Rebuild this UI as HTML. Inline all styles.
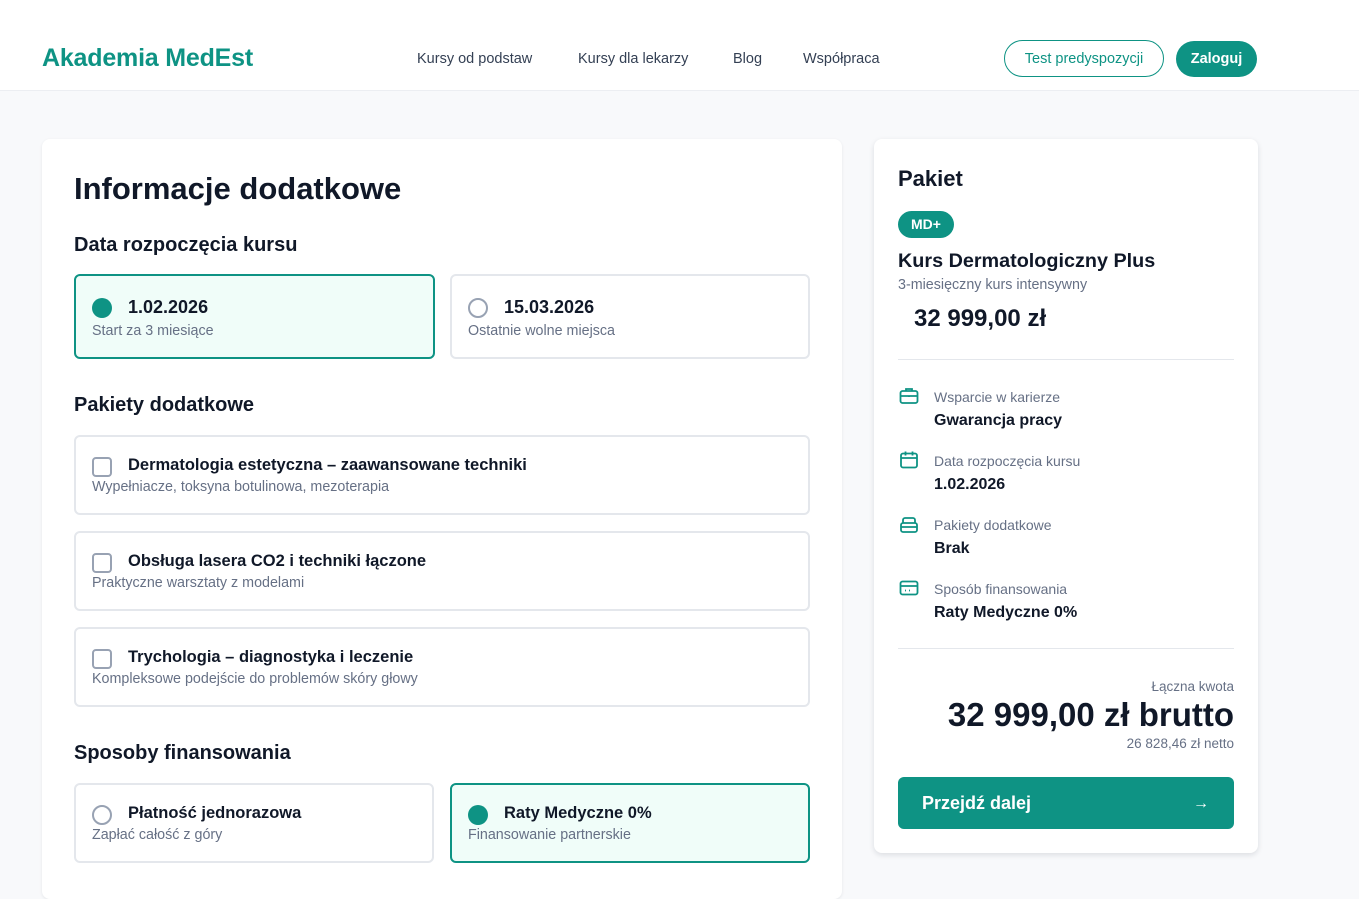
<!DOCTYPE html>
<html><head><meta charset="utf-8"><style>
*{margin:0;padding:0;box-sizing:border-box}
body{width:1359px;height:882px;overflow:hidden;background:#f8f9fb;font-family:"Liberation Sans",sans-serif;color:#101828;position:relative}
.a{position:absolute;white-space:nowrap}
.hdr{position:absolute;left:0;top:0;width:1359px;height:91px;background:#fff;border-bottom:1px solid #eceef2}
.nav{font-size:14.5px;color:#344054}
.card{position:absolute;background:#fff;border-radius:8px;box-shadow:0 1px 3px rgba(16,24,40,.08)}
.opt{position:absolute;border:2px solid #e4e7ec;border-radius:6px;background:#fff}
.opt.sel{border-color:#0e9384;background:#f0fdf9}
.h2{font-size:20px;font-weight:600;color:#101828}
.t{font-size:16.5px;font-weight:700;color:#101828}
.s{font-size:14.3px;color:#667085}
.radio{position:absolute;width:20px;height:20px;border-radius:50%;border:2px solid #98a2b3;background:#fff}
.radio.on{border:none;background:#0e9384}
.cb{position:absolute;width:20px;height:20px;border-radius:4px;border:2px solid #98a2b3;background:#fff}
.lbl{font-size:14px;color:#667085}
.val{font-size:16px;font-weight:700;color:#101828}
</style></head><body>
<div class="hdr"></div>
<div class="a" style="left:42px;top:44px;font-size:25px;font-weight:700;color:#0e9384;letter-spacing:-0.2px">Akademia MedEst</div>
<div class="a nav" style="left:417px;top:51px">Kursy od podstaw</div>
<div class="a nav" style="left:578px;top:51px">Kursy dla lekarzy</div>
<div class="a nav" style="left:733px;top:51px">Blog</div>
<div class="a nav" style="left:803px;top:51px">Współpraca</div>
<div class="a" style="left:1004px;top:40px;width:160px;height:37px;border:1px solid #0e9384;border-radius:19px;color:#0e9384;font-size:14.5px;text-align:center;line-height:37px">Test predyspozycji</div>
<div class="a" style="left:1176px;top:41px;width:81px;height:36px;background:#0e9384;border-radius:18px;color:#fff;font-size:14.5px;font-weight:700;text-align:center;line-height:36px">Zaloguj</div>

<div class="card" style="left:42px;top:139px;width:800px;height:760px"></div>
<div class="a" style="left:74px;top:171px;font-size:31px;font-weight:700">Informacje dodatkowe</div>
<div class="a h2" style="left:74px;top:234px">Data rozpoczęcia kursu</div>
<div class="opt sel" style="left:74px;top:274px;width:361px;height:85px"></div>
<div class="radio on" style="left:92px;top:298px"></div>
<div class="a" style="left:128px;top:297px;font-size:18px;font-weight:700">1.02.2026</div>
<div class="a s" style="left:92px;top:323px">Start za 3 miesiące</div>
<div class="opt" style="left:450px;top:274px;width:360px;height:85px"></div>
<div class="radio" style="left:468px;top:298px"></div>
<div class="a" style="left:504px;top:297px;font-size:18px;font-weight:700">15.03.2026</div>
<div class="a s" style="left:468px;top:323px">Ostatnie wolne miejsca</div>

<div class="a h2" style="left:74px;top:394px">Pakiety dodatkowe</div>
<div class="opt" style="left:74px;top:435px;width:736px;height:80px"></div>
<div class="cb" style="left:92px;top:457px"></div>
<div class="a t" style="left:128px;top:456px">Dermatologia estetyczna – zaawansowane techniki</div>
<div class="a s" style="left:92px;top:479px">Wypełniacze, toksyna botulinowa, mezoterapia</div>
<div class="opt" style="left:74px;top:531px;width:736px;height:80px"></div>
<div class="cb" style="left:92px;top:553px"></div>
<div class="a t" style="left:128px;top:552px">Obsługa lasera CO2 i techniki łączone</div>
<div class="a s" style="left:92px;top:575px">Praktyczne warsztaty z modelami</div>
<div class="opt" style="left:74px;top:627px;width:736px;height:80px"></div>
<div class="cb" style="left:92px;top:649px"></div>
<div class="a t" style="left:128px;top:648px">Trychologia – diagnostyka i leczenie</div>
<div class="a s" style="left:92px;top:671px">Kompleksowe podejście do problemów skóry głowy</div>

<div class="a h2" style="left:74px;top:742px">Sposoby finansowania</div>
<div class="opt" style="left:74px;top:783px;width:360px;height:80px"></div>
<div class="radio" style="left:92px;top:805px"></div>
<div class="a t" style="left:128px;top:804px">Płatność jednorazowa</div>
<div class="a s" style="left:92px;top:827px">Zapłać całość z góry</div>
<div class="opt sel" style="left:450px;top:783px;width:360px;height:80px"></div>
<div class="radio on" style="left:468px;top:805px"></div>
<div class="a t" style="left:504px;top:804px">Raty Medyczne 0%</div>
<div class="a s" style="left:468px;top:827px">Finansowanie partnerskie</div>

<div class="card" style="left:874px;top:139px;width:384px;height:714px;box-shadow:0 2px 6px rgba(16,24,40,.12)"></div>
<div class="a" style="left:898px;top:166px;font-size:22px;font-weight:700">Pakiet</div>
<div class="a" style="left:898px;top:211px;width:56px;height:27px;background:#0e9384;border-radius:14px;color:#fff;font-size:14px;font-weight:700;text-align:center;line-height:27px">MD+</div>
<div class="a" style="left:898px;top:250px;font-size:19.8px;font-weight:700">Kurs Dermatologiczny Plus</div>
<div class="a s" style="left:898px;top:277px">3-miesięczny kurs intensywny</div>
<div class="a" style="left:914px;top:305px;font-size:24px;font-weight:700">32 999,00 zł</div>
<div class="a" style="left:898px;top:359px;width:336px;height:1px;background:#e4e7ec"></div>

<svg class="a" style="left:899px;top:386px" width="20" height="20" viewBox="0 0 20 20" fill="none" stroke="#0e9384" stroke-width="1.8"><rect x="1.5" y="5" width="17" height="12" rx="2"/><path d="M7 5V3h6v2M1.5 10h17M10 9.5v1.5"/></svg>
<div class="a lbl" style="left:934px;top:389px">Wsparcie w karierze</div>
<div class="a val" style="left:934px;top:412px">Gwarancja pracy</div>
<svg class="a" style="left:899px;top:450px" width="20" height="20" viewBox="0 0 20 20" fill="none" stroke="#0e9384" stroke-width="1.8"><rect x="2" y="3.5" width="16" height="14" rx="2"/><path d="M2 8h16M6.5 1.5v4M13.5 1.5v4"/></svg>
<div class="a lbl" style="left:934px;top:453px">Data rozpoczęcia kursu</div>
<div class="a val" style="left:934px;top:476px">1.02.2026</div>
<svg class="a" style="left:899px;top:514px" width="20" height="20" viewBox="0 0 20 20" fill="none" stroke="#0e9384" stroke-width="1.8"><rect x="2" y="9" width="16" height="9" rx="2"/><path d="M4 9V6a2 2 0 0 1 2-2h8a2 2 0 0 1 2 2v3M2 13h16"/></svg>
<div class="a lbl" style="left:934px;top:517px">Pakiety dodatkowe</div>
<div class="a val" style="left:934px;top:540px">Brak</div>
<svg class="a" style="left:899px;top:578px" width="20" height="20" viewBox="0 0 20 20" fill="none" stroke="#0e9384" stroke-width="1.8"><rect x="1.5" y="3.5" width="17" height="13" rx="2"/><path d="M1.5 8h17M6 12.5h1M10 12.5h1"/></svg>
<div class="a lbl" style="left:934px;top:581px">Sposób finansowania</div>
<div class="a val" style="left:934px;top:604px">Raty Medyczne 0%</div>
<div class="a" style="left:898px;top:648px;width:336px;height:1px;background:#e4e7ec"></div>

<div class="a" style="right:125px;top:679px;font-size:13.5px;color:#667085">Łączna kwota</div>
<div class="a" style="right:125px;top:696px;font-size:33px;font-weight:700">32 999,00 zł brutto</div>
<div class="a" style="right:125px;top:736px;font-size:13.5px;color:#667085">26 828,46 zł netto</div>
<div class="a" style="left:898px;top:777px;width:336px;height:52px;background:#0e9384;border-radius:6px"></div>
<div class="a" style="left:922px;top:793px;font-size:18px;font-weight:700;color:#fff">Przejdź dalej</div>
<div class="a" style="left:1193px;top:795px;font-size:16px;color:#fff">→</div>
</body></html>
